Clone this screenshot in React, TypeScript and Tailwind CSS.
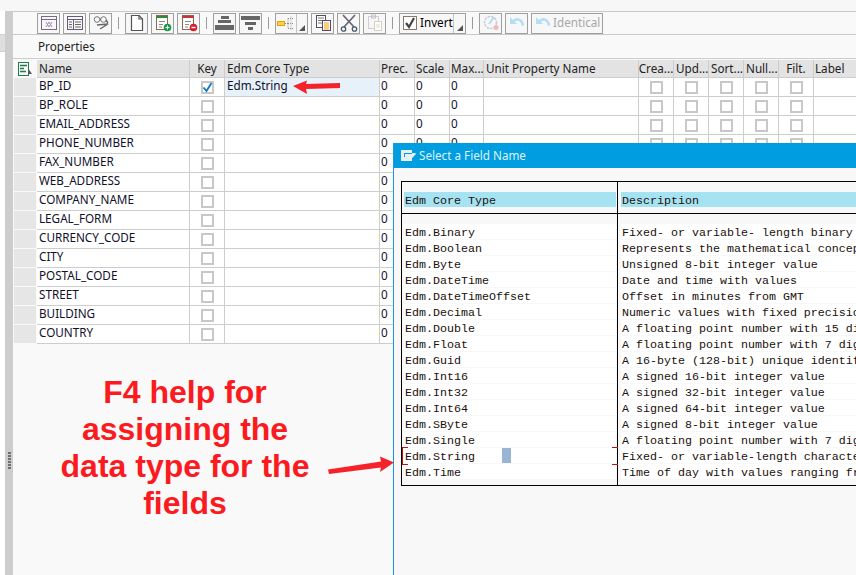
import type { ReactNode } from 'react';

const FIELDS = [
  'BP_ID', 'BP_ROLE', 'EMAIL_ADDRESS', 'PHONE_NUMBER', 'FAX_NUMBER', 'WEB_ADDRESS', 'COMPANY_NAME',
  'LEGAL_FORM', 'CURRENCY_CODE', 'CITY', 'POSTAL_CODE', 'STREET', 'BUILDING', 'COUNTRY',
];

const EDM_TYPES = [
  ['Edm.Binary', 'Fixed- or variable- length binary'],
  ['Edm.Boolean', 'Represents the mathematical concep'],
  ['Edm.Byte', 'Unsigned 8-bit integer value'],
  ['Edm.DateTime', 'Date and time with values'],
  ['Edm.DateTimeOffset', 'Offset in minutes from GMT'],
  ['Edm.Decimal', 'Numeric values with fixed precisio'],
  ['Edm.Double', 'A floating point number with 15 di'],
  ['Edm.Float', 'A floating point number with 7 dig'],
  ['Edm.Guid', 'A 16-byte (128-bit) unique identif'],
  ['Edm.Int16', 'A signed 16-bit integer value'],
  ['Edm.Int32', 'A signed 32-bit integer value'],
  ['Edm.Int64', 'A signed 64-bit integer value'],
  ['Edm.SByte', 'A signed 8-bit integer value'],
  ['Edm.Single', 'A floating point number with 7 dig'],
  ['Edm.String', 'Fixed- or variable-length characte'],
  ['Edm.Time', 'Time of day with values ranging fr'],
];

const HEADERS = ['Name', 'Key', 'Edm Core Type', 'Prec.', 'Scale', 'Max...', 'Unit Property Name', 'Crea...', 'Upd...', 'Sort...', 'Null...', 'Filt.', 'Label'];
const COLS = 'grid grid-cols-[23px_153px_35px_155px_35px_35px_34px_155px_35px_35px_35px_35px_35px_43px]';

function ToolButton({ children, className = 'w-[23px] justify-center' }: { children: ReactNode; className?: string }) {
  return (
    <div className={`h-[21px] shrink-0 border border-[#9f9f9f] bg-[#f7f7f7] flex items-center ${className}`}>
      {children}
    </div>
  );
}

function Sep() {
  return <div className="w-px h-[12px] bg-[#9a9a9a] mx-[3px] shrink-0" />;
}

function Caret() {
  return (
    <div className="flex-1 self-stretch flex items-end justify-center pb-[2px]">
      <svg width="6" height="6" viewBox="0 0 6 6">
        <path d="M6 0V6H0Z" fill="#555" />
      </svg>
    </div>
  );
}

function Icon({ children }: { children: ReactNode }) {
  return <svg width="18" height="18" viewBox="0 0 18 18" fill="none">{children}</svg>;
}

function UndoGlyph() {
  return (
    <>
      <path d="M2 3l7 7H2z" fill="#b5ddf3" />
      <path d="M5 7.500c3-3.500 8.500-3 10 4" stroke="#b5ddf3" strokeWidth="2.600" />
    </>
  );
}

function Toolbar() {
  return (
    <div className="h-[22px] flex items-center pl-[24px] border-y border-[#c8c8c8] box-content gap-[3px]">
      <ToolButton>
        <Icon>
          <rect x="1.500" y="2.500" width="15" height="13" stroke="#77698a" />
          <path d="M1.500 5.500h15" stroke="#77698a" />
          <path d="M6 8l3 5M9 8l-3 5M9 8l3 5M12 8l-3 5" stroke="#9a8fa8" />
        </Icon>
      </ToolButton>
      <ToolButton>
        <Icon>
          <rect x="1.500" y="2.500" width="15" height="13" stroke="#6a5a7a" />
          <path d="M1.500 5.500h15M7.500 5.500v10" stroke="#6a5a7a" />
          <path d="M9 8h6M9 10.500h6M9 13h6M3 8h3M3 10.500h3M3 13h3" stroke="#666" />
        </Icon>
      </ToolButton>
      <ToolButton>
        <Icon>
          <circle cx="5" cy="5.500" r="2.800" stroke="#777" />
          <circle cx="11.500" cy="5.500" r="2.800" stroke="#777" />
          <path d="M8 5.500h1M14 6l2 3M5 11l11-1-8 5" stroke="#666" strokeWidth="1.400" />
        </Icon>
      </ToolButton>
      <Sep />
      <ToolButton>
        <Icon>
          <path d="M3.500 1.500h7.500l3.500 3.500v11.500h-11z" stroke="#555" strokeWidth="1.200" fill="#fff" />
          <path d="M11 1.500v3.500h3.500" stroke="#555" strokeWidth="1.200" />
        </Icon>
      </ToolButton>
      <ToolButton>
        <Icon>
          <rect x="2.500" y="1.500" width="11" height="14" stroke="#8a6a4a" fill="#fff" />
          <path d="M2.500 3h11" stroke="#2e8b3a" strokeWidth="2" />
          <path d="M5 7.500h6M5 10.500h4M5 13h3" stroke="#888" />
          <circle cx="13.500" cy="13.500" r="3.800" fill="#1a9a4a" />
          <path d="M11.500 13.500h4M13.500 11.500v4" stroke="#fff" />
        </Icon>
      </ToolButton>
      <ToolButton>
        <Icon>
          <rect x="2.500" y="1.500" width="11" height="14" stroke="#8a6a4a" fill="#fff" />
          <path d="M2.500 3h11" stroke="#c8323c" strokeWidth="2" />
          <path d="M5 7.500h6M5 10.500h4M5 13h3" stroke="#888" />
          <circle cx="13.500" cy="13.500" r="3.800" fill="#d0202c" />
          <path d="M11.500 13.500h4" stroke="#fff" strokeWidth="1.400" />
        </Icon>
      </ToolButton>
      <Sep />
      <ToolButton>
        <svg width="19" height="16" viewBox="0 0 19 16" fill="#666">
          <rect x="6" y="1" width="8" height="3" />
          <rect x="3" y="5" width="13" height="3" />
          <rect x="0" y="10" width="19" height="5" />
        </svg>
      </ToolButton>
      <ToolButton>
        <svg width="19" height="16" viewBox="0 0 19 16" fill="#666">
          <rect x="0" y="1" width="19" height="4" />
          <rect x="4" y="7" width="11" height="3" />
          <rect x="7" y="12" width="5" height="3" />
        </svg>
      </ToolButton>
      <Sep />
      <ToolButton className="w-[33px]">
        <div className="w-[21px] self-stretch border-r border-[#c4c4c4] flex items-center pl-[1px]">
          <svg width="18" height="15" viewBox="0 0 18 15" fill="none">
            <rect x="0.500" y="5.500" width="7" height="4" stroke="#e8a000" fill="#ffd24a" />
            <path d="M8 7.500h3M11 2.500v10M11 2.500h6M11 7.500h6M11 12.500h6" stroke="#8a8a8a" strokeDasharray="1 1" />
            <path d="M14 0.500v14" stroke="#aaa" strokeDasharray="1 1" />
          </svg>
        </div>
        <Caret />
      </ToolButton>
      <ToolButton>
        <Icon>
          <rect x="2.500" y="1.500" width="9" height="12" stroke="#5a4a6a" fill="#fff" />
          <path d="M4 4h6M4 6.500h6M4 9h6" stroke="#777" />
          <rect x="8.500" y="6.500" width="8" height="10" stroke="#5a4a6a" fill="#fff" />
          <path d="M10 9h5M10 11h5M10 13h5M10 15h5" stroke="#f0a000" />
        </Icon>
      </ToolButton>
      <ToolButton>
        <Icon>
          <path d="M3 1l11 12M15 1L4 13" stroke="#667" strokeWidth="1.700" />
          <circle cx="3.500" cy="15" r="2.200" stroke="#4a5a6a" strokeWidth="1.300" />
          <circle cx="14.500" cy="15" r="2.200" stroke="#4a5a6a" strokeWidth="1.300" />
        </Icon>
      </ToolButton>
      <ToolButton>
        <Icon>
          <rect x="2.500" y="2.500" width="10" height="12" stroke="#cfcfcf" />
          <rect x="5.500" y="1" width="4" height="3" stroke="#c4c4c4" />
          <rect x="8.500" y="7.500" width="7" height="9" stroke="#d0d0d0" fill="#fff" />
          <path d="M10 11h4M10 13h4" stroke="#ecd9a8" />
        </Icon>
      </ToolButton>
      <Sep />
      <ToolButton className="w-[67px]">
        <div className="w-[54px] self-stretch border-r border-[#c4c4c4] flex items-center pl-[3px] shrink-0">
          <svg width="14" height="14" viewBox="0 0 14 14" fill="none" className="shrink-0">
            <rect x="0.500" y="0.500" width="13" height="13" stroke="#8a7a6a" fill="#fff" />
            <path d="M3 7l3 4 5-9" stroke="#444" strokeWidth="2.200" />
          </svg>
          <span className="ml-[3px] text-[11.7px] text-black leading-none">Invert</span>
        </div>
        <Caret />
      </ToolButton>
      <Sep />
      <ToolButton>
        <Icon>
          <circle cx="8.500" cy="8.500" r="6" stroke="#c4ced6" strokeWidth="1.500" strokeDasharray="2.500 1" />
          <path d="M7 10l5-7" stroke="#b9d9ee" strokeWidth="2" />
          <circle cx="14" cy="13.500" r="2.500" fill="#f3b8bc" />
        </Icon>
      </ToolButton>
      <ToolButton>
        <Icon><UndoGlyph /></Icon>
      </ToolButton>
      <ToolButton className="w-[72px] pl-[2px]">
        <Icon><UndoGlyph /></Icon>
        <span className="ml-px text-[11.7px] text-[#a8a8a8] leading-none">Identical</span>
      </ToolButton>
    </div>
  );
}

function Check({ checked }: { checked?: boolean }) {
  return (
    <div className="w-[13px] h-[13px] border-2 border-[#c8c8c8] bg-white relative">
      {checked && (
        <svg width="13" height="13" viewBox="0 0 13 13" fill="none" className="absolute -left-[2px] -top-[2px]">
          <path d="M2.500 6.500l3 3.500 5-8" stroke="#0a78c8" strokeWidth="1.800" />
        </svg>
      )}
    </div>
  );
}

function FieldRow({ name, index }: { name: string; index: number }) {
  const base = 'h-[19px] border-b border-r border-[#cdcdcd] flex items-center';
  const cell = `${base} bg-white`;
  const text = 'pl-[2px] pb-[2px]';
  const num = 'pl-px pb-[2px]';
  const first = index === 0;
  return (
    <>
      <div className="h-[19px] bg-[#e6e6e6] border-b border-r border-[#f9f9f9]" />
      <div className={`${cell} ${text}`}>{name}</div>
      <div className={`${cell} justify-center`}><Check checked={first} /></div>
      {first
        ? <div className={`${base} ${text} bg-[#e6f1fa]`}>Edm.String</div>
        : <div className={cell} />}
      <div className={`${cell} ${num}`}>0</div>
      <div className={`${cell} ${num}`}>0</div>
      <div className={`${cell} ${num}`}>0</div>
      <div className={cell} />
      <div className={`${cell} justify-center`}><Check /></div>
      <div className={`${cell} justify-center`}><Check /></div>
      <div className={`${cell} justify-center`}><Check /></div>
      <div className={`${cell} justify-center`}><Check /></div>
      <div className={`${cell} justify-center`}><Check /></div>
      <div className={cell} />
    </>
  );
}

function FieldTable() {
  return (
    <div className={`${COLS} ml-[1px] text-[11.7px] text-[#10102a] leading-none`}>
      <div className="h-[18px] flex items-center justify-center border-r border-[#f9f9f9]">
        <svg width="16" height="16" viewBox="0 0 16 16" fill="none">
          <rect x="1.500" y="1.500" width="10" height="13" stroke="#1e7d4a" />
          <path d="M3 4.500h7M3 7.500h4M3 10.500h6" stroke="#1e7d4a" strokeWidth="1.600" />
          <path d="M11 7l4 6h-4z" fill="#555" />
        </svg>
      </div>
      {HEADERS.map((h) => {
        let align = 'pl-[2px]';
        if (['Key', 'Crea...', 'Filt.'].includes(h)) align = 'justify-center';
        if (['Prec.', 'Scale', 'Max...', 'Label'].includes(h)) align = 'pl-px';
        return (
          <div key={h} className={`h-[18px] bg-[#e3e3e3] border-b border-r border-[#cdcdcd] flex items-center text-[#222] ${align}`}>
            {h}
          </div>
        );
      })}
      {FIELDS.map((f, i) => <FieldRow key={f} name={f} index={i} />)}
    </div>
  );
}

function F4Dialog() {
  return (
    <div className="absolute left-[393px] top-[143px] right-0 bottom-0 bg-[#f8f8f8] border-l border-[#159bd8] flex flex-col overflow-hidden">
      <div className="h-[25px] bg-[#009de0] flex items-center pl-[7px] shrink-0">
        <svg width="15" height="11" viewBox="0 0 15 11" className="shrink-0">
          <path d="M0 0h11v3h4L11 8v3H0z" fill="#e8eef2" />
          <path d="M3 3h8v4H3z" fill="#009de0" />
          <path d="M4 4h11l-4 4H4z" fill="#e8eef2" />
        </svg>
        <span className="ml-[3px] text-[11.7px] text-[#dff2fb] leading-none">Select a Field Name</span>
      </div>
      <div className="ml-[7px] mt-[13px] w-[500px] h-[305px] border border-black font-['Liberation_Mono',monospace] text-[11.67px] leading-[19px] text-[#20100c] grid grid-cols-[216px_1fr]">
        <div className="border-r border-black flex flex-col">
          <div className="h-[32px] border-b border-black pt-[10px] pb-[5px] pl-[2px] pr-[1px]">
            <div className="h-[15px] bg-[#a5e3f3] pl-[1px]">Edm Core Type</div>
          </div>
          <div className="pt-[10px] pl-[2px] pr-[1px] flex flex-col gap-px">
            {EDM_TYPES.map(([t]) => (
              <div key={t} className="h-[15px] bg-white pl-[1px] relative whitespace-nowrap">
                {t}
                {t === 'Edm.String' && <div className="absolute left-[98px] top-0 w-[9px] h-[15px] bg-[#9ab5d3]" />}
              </div>
            ))}
          </div>
        </div>
        <div className="flex flex-col overflow-hidden">
          <div className="h-[32px] border-b border-black pt-[10px] pb-[5px] pl-[3px]">
            <div className="h-[15px] bg-[#a5e3f3] pl-[1px]">Description</div>
          </div>
          <div className="pt-[10px] pl-[3px] flex flex-col gap-px">
            {EDM_TYPES.map(([t, d]) => (
              <div key={t} className="h-[15px] bg-white pl-[1px] whitespace-nowrap">{d}</div>
            ))}
          </div>
        </div>
      </div>
      {/* red selection brackets round the Edm.String row */}
      <div className="absolute left-[8px] top-[304px] w-[6px] h-[18px] border-y border-l border-[#c01010]" />
      <div className="absolute left-[218px] top-[304px] w-[6px] h-[18px] border-y border-[#c01010]" />
    </div>
  );
}

export default function App() {
  return (
    <div className="relative w-[856px] h-[575px] overflow-hidden bg-white font-['Noto_Sans','Liberation_Sans',sans-serif]">
      <div className="h-[11px] bg-[#f7f7f7]" />
      <div className="flex h-[564px]">
        <div className="w-[5px] shrink-0">
          <div className="mt-[23px] h-[18px] bg-[#dedede] border-y border-[#cfcfcf]" />
        </div>
        <div className="w-[8px] shrink-0 bg-[#cdcdcd] flex flex-col items-center pt-[441px] gap-[1px]">
          {[0, 1, 2, 3, 4, 5].map((i) => <div key={i} className="w-[3px] h-[2px] bg-[#6f6f6f]" />)}
        </div>
        <div className="flex-1 bg-[#f9f9f9] min-w-0">
          <Toolbar />
          <div className="h-[24px] flex items-center pl-[25px] text-[11.7px] text-[#222] border-b border-[#cdcdcd] mb-[1px]">Properties</div>
          <FieldTable />
          <div className="mt-[30px] w-[344px] text-center font-['Liberation_Sans',sans-serif] font-bold text-[32px] leading-[37px] text-[#fb1a20]">
            F4 help for<br />assigning the<br />data type for the<br />fields
          </div>
        </div>
      </div>
      <F4Dialog />
      {/* annotation arrows */}
      <svg className="absolute left-[290px] top-[78px]" width="56" height="18" viewBox="0 0 56 18">
        <path d="M3 8L17 2.500 16 6 50 5V10L16 11 17 16Z" fill="#f5222a" />
      </svg>
      <svg className="absolute left-[326px] top-[455px]" width="70" height="22" viewBox="0 0 70 22">
        <path d="M2 14.500L3 19 55 12.500 54 17 68 7.500 54 1.500 55 6.500Z" fill="#f5222a" />
      </svg>
    </div>
  );
}
